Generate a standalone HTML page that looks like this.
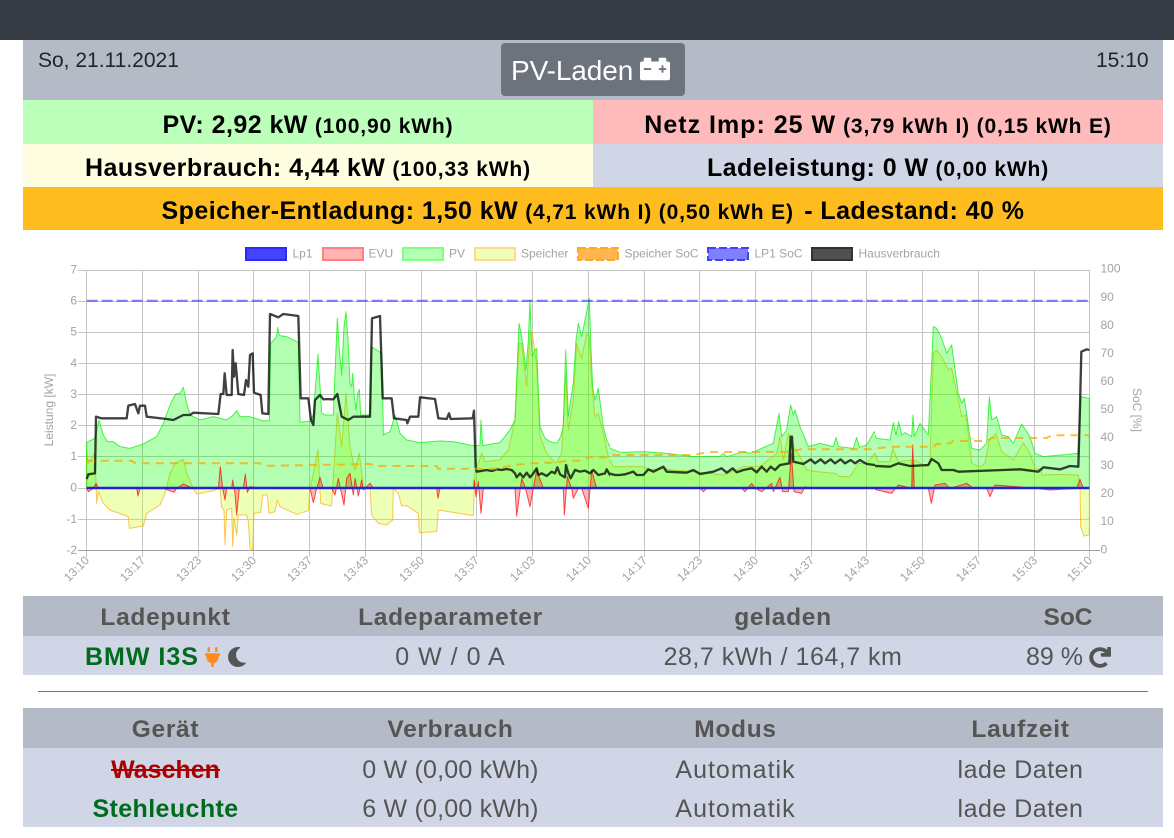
<!DOCTYPE html>
<html><head><meta charset="utf-8"><title>openWB</title>
<style>
html,body{margin:0;padding:0;background:#fff;width:1174px;height:838px;overflow:hidden;font-family:"Liberation Sans",sans-serif}
.a{position:absolute;white-space:nowrap}
.c{display:flex;align-items:center;justify-content:center;text-align:center}
.rw{font-weight:700;color:#000;font-size:25px;letter-spacing:.45px;text-align:center}
.rw small{font-size:21px;letter-spacing:.85px;margin-left:7px}
.th{font-weight:700;color:#555;font-size:24.5px;background:#b5bac7;height:40px;letter-spacing:.7px;box-sizing:border-box;padding-top:4px}
svg text{font-family:"Liberation Sans",sans-serif;font-size:12px;fill:#a3a3a3}
.pv{fill:rgba(0,255,0,.3);stroke:rgba(0,240,0,.7);stroke-width:3;stroke-linejoin:round}
.sp{fill:rgba(200,255,13,.3);stroke:rgba(255,165,0,.65);stroke-width:3;stroke-linejoin:round}
.ev{fill:rgba(255,10,13,.3);stroke:rgba(255,0,0,.7);stroke-width:3;stroke-linejoin:round}
.ha{fill:none;stroke:rgba(0,0,0,.75);stroke-width:7;stroke-linejoin:round}
</style></head><body>
<div class="a" style="left:0;top:0;width:1174px;height:40px;background:#363a42"></div>
<div class="a" style="left:23px;top:40px;width:1140px;height:60px;background:#b5bac7"></div>
<div class="a" style="left:38px;top:48px;font-size:21px;line-height:26px;color:#212529">So, 21.11.2021</div>
<div class="a" style="left:1096px;top:48px;font-size:21px;line-height:26px;color:#212529">15:10</div>
<div class="a" style="left:501px;top:43px;width:184px;height:53px;background:#6c737d;border-radius:4px"></div>
<div class="a" style="left:511px;top:54px;font-size:28px;line-height:34px;color:#fff;letter-spacing:-.1px">PV-Laden</div>
<svg class="a" style="left:640px;top:54px" width="30" height="30" viewBox="0 0 512 512"><path fill="#fff" d="M480 128h-32V80c0-8.84-7.16-16-16-16h-96c-8.84 0-16 7.16-16 16v48H192V80c0-8.84-7.16-16-16-16H80c-8.84 0-16 7.16-16 16v48H32c-17.67 0-32 14.33-32 32v256c0 17.67 14.33 32 32 32h448c17.67 0 32-14.33 32-32V160c0-17.67-14.33-32-32-32zM192 264c0 4.42-3.58 8-8 8H72c-4.42 0-8-3.58-8-8v-16c0-4.42 3.58-8 8-8h112c4.42 0 8 3.58 8 8v16zm256 0c0 4.42-3.58 8-8 8h-40v40c0 4.42-3.58 8-8 8h-16c-4.42 0-8-3.58-8-8v-40h-40c-4.42 0-8-3.58-8-8v-16c0-4.42 3.58-8 8-8h40v-40c0-4.42 3.58-8 8-8h16c4.42 0 8 3.58 8 8v40h40c4.42 0 8 3.58 8 8v16z"/></svg>

<div class="a rw" style="left:23px;top:100px;width:570px;height:44px;line-height:50px;background:#bbffbb">PV: 2,92 kW<small>(100,90 kWh)</small></div>
<div class="a rw" style="left:593px;top:100px;width:570px;height:44px;line-height:50px;background:#ffbbbb"><span style="letter-spacing:1px">Netz Imp: 25 W</span><small>(3,79 kWh I) (0,15 kWh E)</small></div>
<div class="a rw" style="left:23px;top:144px;width:570px;height:43px;line-height:48px;background:#fffde0">Hausverbrauch: 4,44 kW<small>(100,33 kWh)</small></div>
<div class="a rw" style="left:593px;top:144px;width:570px;height:43px;line-height:48px;background:#d0d6e6">Ladeleistung: 0 W<small>(0,00 kWh)</small></div>
<div class="a rw" style="left:23px;top:187px;width:1140px;height:43px;line-height:48px;background:#ffbc1e">Speicher-Entladung: 1,50 kW<small style="margin-right:3px">(4,71 kWh I) (0,50 kWh E)</small>&nbsp;- Ladestand: 40 %</div>

<svg class="a" style="left:0;top:0" width="1174" height="838" viewBox="0 0 1174 838">
<g stroke="#c4c4c4" stroke-width="1" fill="none" shape-rendering="crispEdges">
<path d="M78 270.5H1089M78 301.5H1089M78 332.5H1089M78 363.5H1089M78 394.5H1089M78 425.5H1089M78 456.5H1089M78 488.5H1089M78 519.5H1089"/>
<path d="M86.5 270V557M142.5 270V557M198.5 270V557M253.5 270V557M309.5 270V557M365.5 270V557M421.5 270V557M476.5 270V557M532.5 270V557M588.5 270V557M644.5 270V557M699.5 270V557M755.5 270V557M811.5 270V557M866.5 270V557M922.5 270V557M978.5 270V557M1034.5 270V557M1089.5 270V557"/>
<path d="M78 550.5H1100" stroke="#a0a0a0"/>
</g>
<!-- legend -->
<g stroke-width="2">
<rect x="246" y="248" width="40" height="12" fill="#4444ff" stroke="#2a2aff"/>
<rect x="323" y="248" width="40" height="12" fill="#ffb3b3" stroke="#ff8080"/>
<rect x="403" y="248" width="40" height="12" fill="#b3ffb3" stroke="#80ff80"/>
<rect x="475" y="248" width="40" height="12" fill="#efffb6" stroke="#ffd98c"/>
<rect x="578" y="248" width="40" height="12" fill="#ffb74d" stroke="#ffa726" stroke-dasharray="8 3"/>
<rect x="708" y="248" width="40" height="12" fill="#8080ff" stroke="#4040ff" stroke-dasharray="8 3"/>
<rect x="812" y="248" width="40" height="12" fill="#505050" stroke="#333"/>
</g>
<text x="292.500" y="257.500">Lp1</text><text x="368.500" y="257.500">EVU</text><text x="449" y="257.500">PV</text><text x="521" y="257.500">Speicher</text><text x="624.500" y="257.500">Speicher SoC</text><text x="754.500" y="257.500">LP1 SoC</text><text x="858.500" y="257.500">Hausverbrauch</text>
<!-- y labels -->
<g text-anchor="end">
<text x="77" y="273.500">7</text><text x="77" y="304.500">6</text><text x="77" y="335.500">5</text><text x="77" y="367">4</text><text x="77" y="398">3</text><text x="77" y="429">2</text><text x="77" y="460">1</text><text x="77" y="491.500">0</text><text x="77" y="523">-1</text><text x="77" y="554">-2</text>
</g>
<g>
<text x="1100.500" y="272.500">100</text><text x="1100.500" y="301">90</text><text x="1100.500" y="329">80</text><text x="1100.500" y="357">70</text><text x="1100.500" y="385">60</text><text x="1100.500" y="413">50</text><text x="1100.500" y="441">40</text><text x="1100.500" y="469">30</text><text x="1100.500" y="497">20</text><text x="1100.500" y="525">10</text><text x="1100.500" y="553.500">0</text>
</g>
<text transform="translate(53,410) rotate(-90)" text-anchor="middle">Leistung [kW]</text>
<text transform="translate(1133,410) rotate(90)" text-anchor="middle">SoC [%]</text>
<!-- x labels -->
<g text-anchor="end">
<text transform="translate(90,561) rotate(-45)">13:10</text><text transform="translate(146,561) rotate(-45)">13:17</text><text transform="translate(202,561) rotate(-45)">13:23</text><text transform="translate(257,561) rotate(-45)">13:30</text><text transform="translate(313,561) rotate(-45)">13:37</text><text transform="translate(369,561) rotate(-45)">13:43</text><text transform="translate(425,561) rotate(-45)">13:50</text><text transform="translate(480,561) rotate(-45)">13:57</text><text transform="translate(536,561) rotate(-45)">14:03</text><text transform="translate(592,561) rotate(-45)">14:10</text><text transform="translate(648,561) rotate(-45)">14:17</text><text transform="translate(703,561) rotate(-45)">14:23</text><text transform="translate(759,561) rotate(-45)">14:30</text><text transform="translate(815,561) rotate(-45)">14:37</text><text transform="translate(870,561) rotate(-45)">14:43</text><text transform="translate(926,561) rotate(-45)">14:50</text><text transform="translate(982,561) rotate(-45)">14:57</text><text transform="translate(1038,561) rotate(-45)">15:03</text><text transform="translate(1093,561) rotate(-45)">15:10</text>
</g>

<svg x="30" y="240" width="295" height="350" viewBox="0 0 885 1050">
<polyline class="sp" points="170,744 170,632 175,670 195,638 200,790 205,755 220,790 240,810 295,830 298,865 340,858 350,820 390,795 405,760 420,700 435,670 460,658 470,700 490,745 500,762 550,752 570,745 575,800 582,812 585,915 590,810 605,805 608,920 612,835 620,885 625,825 650,825 655,845 660,925 668,930 672,820 692,817 698,765 712,765 717,820 735,815 742,780 750,800 800,823 835,812 840,745 850,700 864,628 872,790 900,798 900,744"/>
<polyline class="pv" points="170,744 170,607 195,595 207,540 220,585 232,605 250,605 270,620 300,625 340,612 380,590 400,550 420,495 437,462 450,460 460,442 470,490 480,525 510,540 550,530 590,540 610,525 620,512 630,530 660,530 700,543 718,542 722,310 740,290 743,262 748,287 770,290 805,307 810,547 840,543 850,525 864,342 875,520 900,530 900,744"/>
<polyline class="ev" points="170,744 175,755 190,745 198,730 205,745 320,745 324,768 330,745 400,745 432,757 440,745 460,732 490,745 565,745 571,680 578,745 585,780 590,745 605,745 608,720 615,760 620,825 628,745 640,745 646,702 652,757 660,740 700,745 840,745 850,788 860,745 870,712 880,745 900,745"/>
<polyline class="ha" points="170,717 175,703 195,700 198,530 215,535 290,535 295,497 315,492 325,520 330,497 345,497 350,530 410,537 430,540 460,525 480,525 490,518 565,522 572,462 580,462 584,400 590,465 605,465 608,330 612,410 617,370 625,462 642,465 648,420 655,440 660,345 668,340 672,458 692,465 697,520 715,522 720,222 745,232 760,222 805,228 812,475 835,475 843,540 850,555 855,480 870,465 880,478 900,478"/>
</svg>
<svg x="325" y="240" width="285" height="350" viewBox="15 0 855 1050">
<polyline class="sp" points="0,744 0,790 35,798 40,710 52,520 65,620 78,460 90,620 98,660 105,690 118,640 130,740 150,745 155,825 175,850 200,855 218,840 220,745 235,760 245,798 260,797 295,820 298,878 350,875 355,810 460,827 465,690 475,670 485,640 495,665 540,660 565,630 585,540 597,310 605,310 620,440 630,275 637,280 650,375 660,590 680,640 707,670 725,640 737,400 745,570 760,480 770,310 785,355 800,280 808,290 815,430 825,530 835,520 850,580 865,650 900,650 900,744"/>
<polyline class="pv" points="0,744 0,525 40,525 45,400 52,235 58,330 65,405 72,260 78,215 84,300 90,430 95,440 98,400 103,470 108,510 113,460 118,448 122,525 150,525 155,320 185,340 188,450 190,585 210,575 225,525 232,550 240,580 260,600 300,608 360,603 400,605 465,618 480,615 483,540 488,617 540,608 570,570 585,540 597,250 605,290 612,340 618,390 625,300 630,180 634,300 637,350 645,330 650,325 655,450 660,560 675,595 690,605 710,610 722,590 730,560 737,330 745,530 752,480 760,430 768,300 775,250 785,290 795,240 808,175 812,300 818,440 825,480 835,445 842,500 850,560 860,600 870,620 900,635 900,744"/>
<polyline class="ev" points="0,744 0,712 8,745 35,745 45,765 55,715 72,795 80,715 90,700 100,765 105,715 115,768 125,720 130,750 150,730 160,745 350,745 354,775 360,745 460,745 463,720 468,770 475,725 483,820 490,745 585,745 590,828 605,715 615,740 630,800 650,690 670,745 730,745 733,825 742,710 755,745 760,775 775,745 785,745 805,805 815,690 830,745 900,745 900,744"/>
<polyline class="ha" points="0,477 40,478 52,462 65,530 85,540 100,530 150,530 156,235 180,228 188,475 215,475 222,535 260,540 262,550 270,530 295,530 300,472 345,477 355,535 380,537 387,520 392,537 458,535 462,512 467,680 470,695 500,690 515,693 530,688 545,690 560,687 575,690 585,700 590,712 600,700 610,712 620,698 630,712 640,700 650,685 655,705 665,700 680,708 695,695 705,700 712,682 720,703 735,712 738,675 745,700 752,715 765,690 780,695 795,692 810,700 820,690 835,705 855,700 860,688 870,705 885,700 900,706"/>
</svg>
<svg x="610" y="240" width="265" height="350" viewBox="30 0 795 1050">
<polyline class="sp" points="0,744 0,630 10,590 25,650 40,680 130,680 150,690 190,685 220,690 280,695 370,705 430,680 480,680 530,640 540,590 550,660 565,580 575,610 600,650 620,690 650,695 705,700 720,710 750,710 775,670 800,670 825,640 840,670 840,744"/>
<polyline class="pv" points="0,744 0,445 10,580 30,625 60,637 130,635 200,640 280,650 360,650 370,640 380,650 430,635 450,640 520,610 537,520 545,590 560,570 572,495 580,525 585,510 600,560 625,620 660,610 700,620 708,592 715,620 760,625 770,592 778,622 800,615 823,575 835,600 840,600 840,744"/>
<polyline class="ev" points="0,744 0,720 20,745 300,745 310,755 320,745 395,745 425,745 435,755 455,730 465,745 485,755 515,730 520,755 540,712 548,755 565,755 574,640 582,755 605,760 615,740 630,745 840,745 840,744"/>
<polyline class="ha" points="0,705 15,690 25,700 45,705 60,705 75,703 100,695 110,705 130,705 145,688 160,695 190,680 200,695 260,698 280,690 300,702 340,695 365,685 380,698 398,685 410,697 430,690 455,685 470,697 485,680 500,695 512,680 525,690 540,675 568,670 572,590 576,590 580,665 610,672 632,658 645,670 662,658 675,670 692,658 705,670 722,658 735,670 752,660 765,670 780,660 800,672 825,675 840,675"/>
</svg>
<svg x="875" y="240" width="299" height="350" viewBox="15 0 897 1050">
<polyline class="sp" points="0,744 0,670 15,640 25,665 60,665 68,625 85,665 125,660 128,740 133,660 170,680 180,660 190,340 200,330 215,350 235,390 245,385 265,480 275,530 288,525 305,670 330,680 345,670 358,600 378,580 395,635 430,660 460,608 480,640 495,685 515,690 515,705 560,703 625,705 630,745 632,860 642,888 658,885 658,744"/>
<polyline class="pv" points="0,744 0,600 10,575 20,595 60,600 70,548 78,585 86,545 95,585 105,578 125,590 129,525 133,590 150,550 175,585 190,260 200,265 215,295 230,340 245,315 265,460 275,490 283,475 305,625 330,630 350,610 358,470 365,540 380,530 395,585 415,590 430,610 455,552 480,590 495,640 520,650 625,640 632,470 658,475 658,744"/>
<polyline class="ev" points="0,744 0,745 65,760 85,735 125,745 128,615 133,745 175,745 184,790 195,735 225,730 240,745 290,730 310,745 350,745 360,770 375,735 500,745 540,750 620,745 630,718 640,745 658,745"/>
<polyline class="ha" points="0,677 60,680 85,670 120,678 175,675 185,657 205,670 215,690 250,690 265,695 400,690 450,688 505,695 520,682 570,688 600,678 625,680 630,500 634,335 650,328 658,330"/>
</svg>

<polyline fill="none" stroke="rgba(255,165,0,.75)" stroke-width="2" stroke-dasharray="8 6" points="86.700,460.700 131.700,460.700 135,463.300 260,463.300 263.300,466 370,464 375,466 436.700,466 438.300,468.700 496.700,468.700 513.300,465 540,462.700 556.700,462.700 566.700,460.700 583.300,460.700 588.300,457.300 606.700,457.300 610,455 693.300,455 708.300,452 786.700,452 801.700,449.300 870,449.300 890,446.700 933.300,446.700 936.700,444 950,443.300 953.300,441 986.700,441 991.700,438 1046.700,438 1051.700,435.300 1089.300,435.300"/>
<line x1="86.700" y1="300.700" x2="1089.300" y2="300.700" stroke="rgba(0,0,255,.5)" stroke-width="2" stroke-dasharray="11 4"/>
<line x1="86.700" y1="488" x2="1089.300" y2="488" stroke="#2222dd" stroke-width="2.500"/>
</svg>

<div class="a c th" style="left:23px;top:596px;width:285px">Ladepunkt</div>
<div class="a c th" style="left:308px;top:596px;width:285px">Ladeparameter</div>
<div class="a c th" style="left:593px;top:596px;width:380px">geladen</div>
<div class="a c th" style="left:973px;top:596px;width:190px;letter-spacing:0">SoC</div>
<div class="a" style="left:23px;top:636px;width:1140px;height:39px;background:#d0d6e6"></div>
<div class="a" style="left:85px;top:642px;font-size:25px;line-height:31px;font-weight:700;color:#006b1c;letter-spacing:1px">BMW I3S</div>
<svg class="a" style="left:205px;top:647px" width="15" height="20" viewBox="0 0 384 512"><path fill="#ff8c1a" d="M320,32a32,32,0,0,0-64,0v96h64Zm48,128H16A16,16,0,0,0,0,176v32a16,16,0,0,0,16,16H32v32A160.070,160.070,0,0,0,160,412.800V512h64V412.800A160.070,160.070,0,0,0,352,256V224h16a16,16,0,0,0,16-16V176A16,16,0,0,0,368,160ZM128,32a32,32,0,0,0-64,0v96h64Z"/></svg>
<svg class="a" style="left:227px;top:647px" width="20" height="20" viewBox="0 0 512 512"><path fill="#555" d="M283.211 512c78.962 0 151.079-35.925 198.857-94.792 7.068-8.708-.639-21.430-11.562-19.350-124.203 23.654-238.262-71.576-238.262-196.954 0-72.222 38.662-138.635 101.498-174.394 9.686-5.512 7.250-20.197-3.756-22.230A258.156 258.156 0 0 0 283.211 0c-141.309 0-256 114.511-256 256 0 141.309 114.511 256 256 256z"/></svg>
<div class="a c" style="left:308px;top:642px;width:285px;height:31px;font-size:25px;color:#555;letter-spacing:1px">0 W / 0 A</div>
<div class="a c" style="left:593px;top:642px;width:380px;height:31px;font-size:25px;color:#555;letter-spacing:.5px">28,7 kWh / 164,7 km</div>
<div class="a" style="left:1026px;top:642px;line-height:31px;font-size:25px;color:#555">89 %</div>
<svg class="a" style="left:1089px;top:647px" width="22" height="21" viewBox="-10 -10 532 532" preserveAspectRatio="none"><path fill="#555" stroke="#555" stroke-width="24" stroke-linejoin="round" d="M500.330 0h-47.410a12 12 0 0 0-12 12.570l4 82.760A247.420 247.420 0 0 0 256 8C119.340 8 7.900 119.530 8 256.190 8.100 393.070 119.100 504 256 504a247.100 247.100 0 0 0 166.180-63.910 12 12 0 0 0 .48-17.430l-34-34a12 12 0 0 0-16.380-.55A176 176 0 1 1 402.100 157.800l-101.530-4.870a12 12 0 0 0-12.570 12v47.410a12 12 0 0 0 12 12h200.330a12 12 0 0 0 12-12V12a12 12 0 0 0-12-12z"/></svg>

<div class="a" style="left:38px;top:691px;width:1110px;height:1px;background:#70757c"></div>

<div class="a c th" style="left:23px;top:708px;width:285px">Gerät</div>
<div class="a c th" style="left:308px;top:708px;width:285px">Verbrauch</div>
<div class="a c th" style="left:593px;top:708px;width:285px">Modus</div>
<div class="a c th" style="left:878px;top:708px;width:285px">Laufzeit</div>
<div class="a" style="left:23px;top:748px;width:1140px;height:79px;background:#d0d6e6"></div>
<div class="a c" style="left:23px;top:755px;width:285px;height:31px;font-size:25px;font-weight:700;color:#a80000;text-decoration:line-through">Waschen</div>
<div class="a c" style="left:308px;top:755px;width:285px;height:31px;font-size:25px;color:#555;letter-spacing:.2px">0 W (0,00 kWh)</div>
<div class="a c" style="left:593px;top:755px;width:285px;height:31px;font-size:25px;color:#555;letter-spacing:1px">Automatik</div>
<div class="a c" style="left:878px;top:755px;width:285px;height:31px;font-size:25px;color:#555;letter-spacing:.5px">lade Daten</div>
<div class="a c" style="left:23px;top:794px;width:285px;height:31px;font-size:25px;font-weight:700;color:#006b1c;letter-spacing:.4px">Stehleuchte</div>
<div class="a c" style="left:308px;top:794px;width:285px;height:31px;font-size:25px;color:#555;letter-spacing:.2px">6 W (0,00 kWh)</div>
<div class="a c" style="left:593px;top:794px;width:285px;height:31px;font-size:25px;color:#555;letter-spacing:1px">Automatik</div>
<div class="a c" style="left:878px;top:794px;width:285px;height:31px;font-size:25px;color:#555;letter-spacing:.5px">lade Daten</div>
</body></html>
